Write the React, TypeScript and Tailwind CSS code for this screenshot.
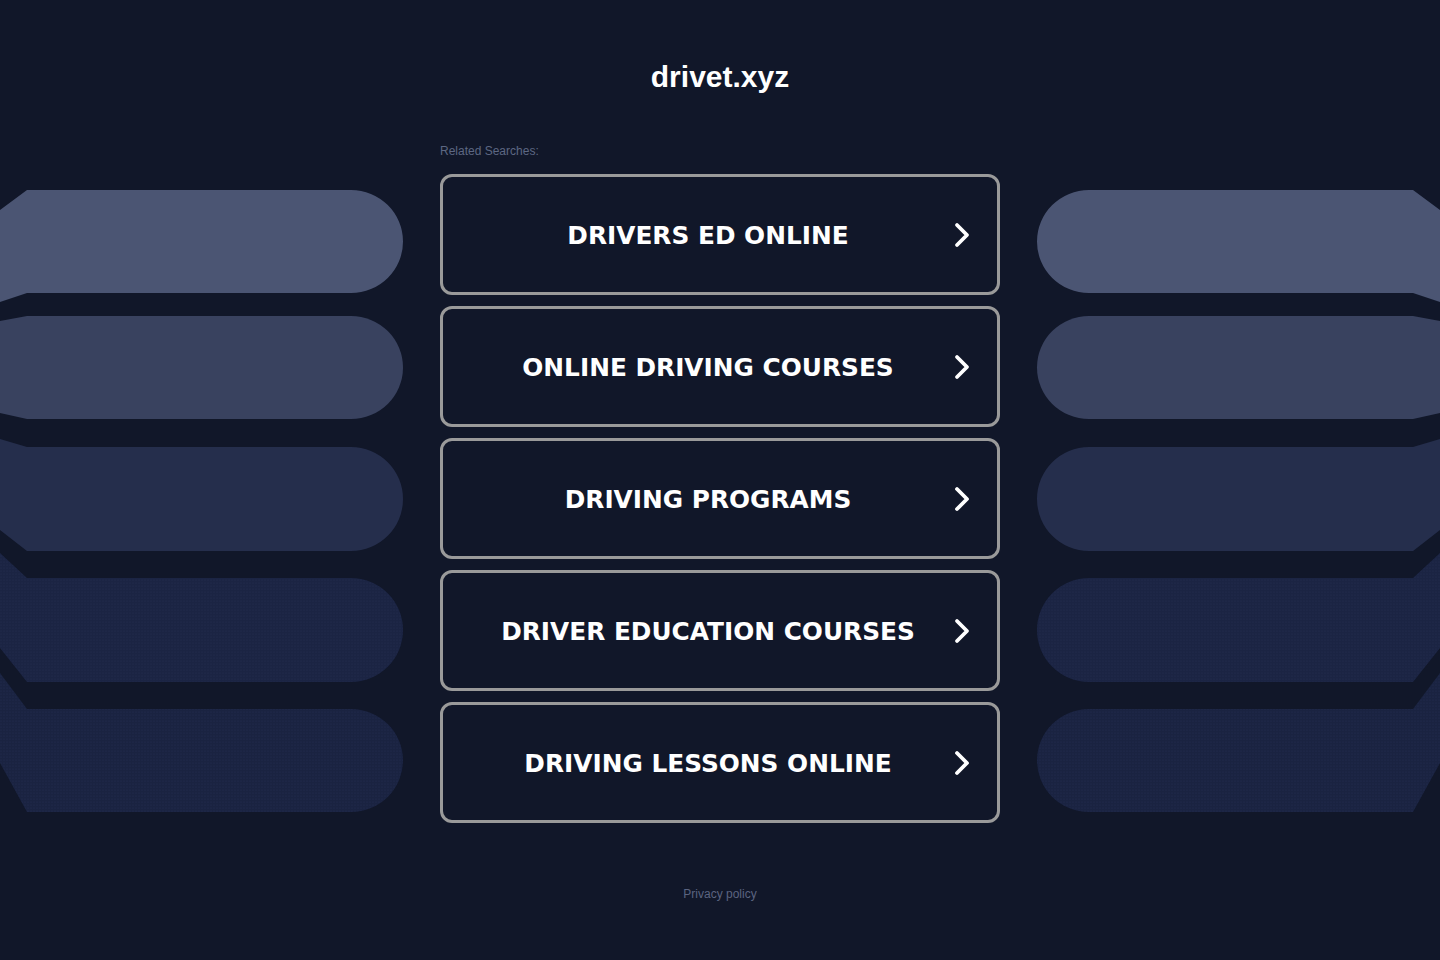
const searches = [
  'DRIVERS ED ONLINE',
  'ONLINE DRIVING COURSES',
  'DRIVING PROGRAMS',
  'DRIVER EDUCATION COURSES',
  'DRIVING LESSONS ONLINE',
];

// bands of the side decoration: top, bottom, left edge top, left edge bottom, colour
const bands = [
  { top: 190, bottom: 293, edgeTop: 210, edgeBottom: 302, fill: '#4b5573' },
  { top: 316, bottom: 419, edgeTop: 321, edgeBottom: 413, fill: '#39425f' },
  { top: 447, bottom: 551, edgeTop: 439, edgeBottom: 530, fill: '#252e4c' },
  { top: 578, bottom: 682, edgeTop: 553, edgeBottom: 648, fill: '#1b2443' },
  { top: 709, bottom: 812, edgeTop: 673, edgeBottom: 763, fill: '#1a2341' },
];

function SideBands({ mirrored }: { mirrored?: boolean }) {
  const patternId = mirrored ? 'dots-r' : 'dots-l';
  return (
    <svg
      viewBox="0 0 440 960"
      className={mirrored ? 'block h-[960px] w-full -scale-x-100' : 'block h-[960px] w-full'}
      preserveAspectRatio="none"
    >
      <defs>
        <pattern id={patternId} width="3" height="3" patternUnits="userSpaceOnUse">
          <circle cx="1" cy="1" r="0.6" fill="#2a3559" opacity="0.6" />
        </pattern>
      </defs>
      {bands.map((b, i) => {
        const r = (b.bottom - b.top) / 2;
        const d = `M0,${b.edgeTop} L27,${b.top} L351,${b.top} A52,${r} 0 0 1 351,${b.bottom} L27,${b.bottom} L0,${b.edgeBottom} Z`;
        return (
          <g key={i}>
            <path d={d} fill={b.fill} />
            {i >= 3 && <path d={d} fill={`url(#${patternId})`} />}
          </g>
        );
      })}
    </svg>
  );
}

function Chevron() {
  return (
    <svg viewBox="0 0 16 26" className="h-[26px] w-[16px] shrink-0" fill="none">
      <polyline
        points="3,3 13,13 3,23"
        stroke="white"
        strokeWidth="3.8"
        strokeLinecap="round"
        strokeLinejoin="round"
      />
    </svg>
  );
}

export default function App() {
  return (
    <div className="flex min-h-[960px] w-full bg-[#111729]">
      <div className="flex-1">
        <SideBands />
      </div>

      <div className="flex w-[560px] shrink-0 flex-col">
        <h1 className="pt-[59px] text-center text-[30px] font-bold leading-[36px] text-white [font-family:'Liberation_Sans',Arial,sans-serif]">
          drivet.xyz
        </h1>

        <p className="mt-[49px] text-[12px] leading-[14px] text-[#5d6783] [font-family:'Liberation_Sans',Arial,sans-serif]">
          Related Searches:
        </p>

        <div className="mt-[16px] flex flex-col gap-[11px]">
          {searches.map((label) => (
            <a
              key={label}
              href="#"
              className="flex h-[121px] items-center gap-[11px] rounded-[12px] border-[3px] border-[#9a9a9a] pl-[30px] pr-[27px]"
            >
              <span className="flex-1 pt-[3px] text-center text-[24.8px] font-bold text-white [font-family:'DejaVu_Sans',Verdana,sans-serif]">
                {label}
              </span>
              <Chevron />
            </a>
          ))}
        </div>

        <p className="mt-[64px] text-center text-[12px] leading-[14px] text-[#5b6480] [font-family:'Liberation_Sans',Arial,sans-serif]">
          Privacy policy
        </p>
      </div>

      <div className="flex-1">
        <SideBands mirrored />
      </div>
    </div>
  );
}
